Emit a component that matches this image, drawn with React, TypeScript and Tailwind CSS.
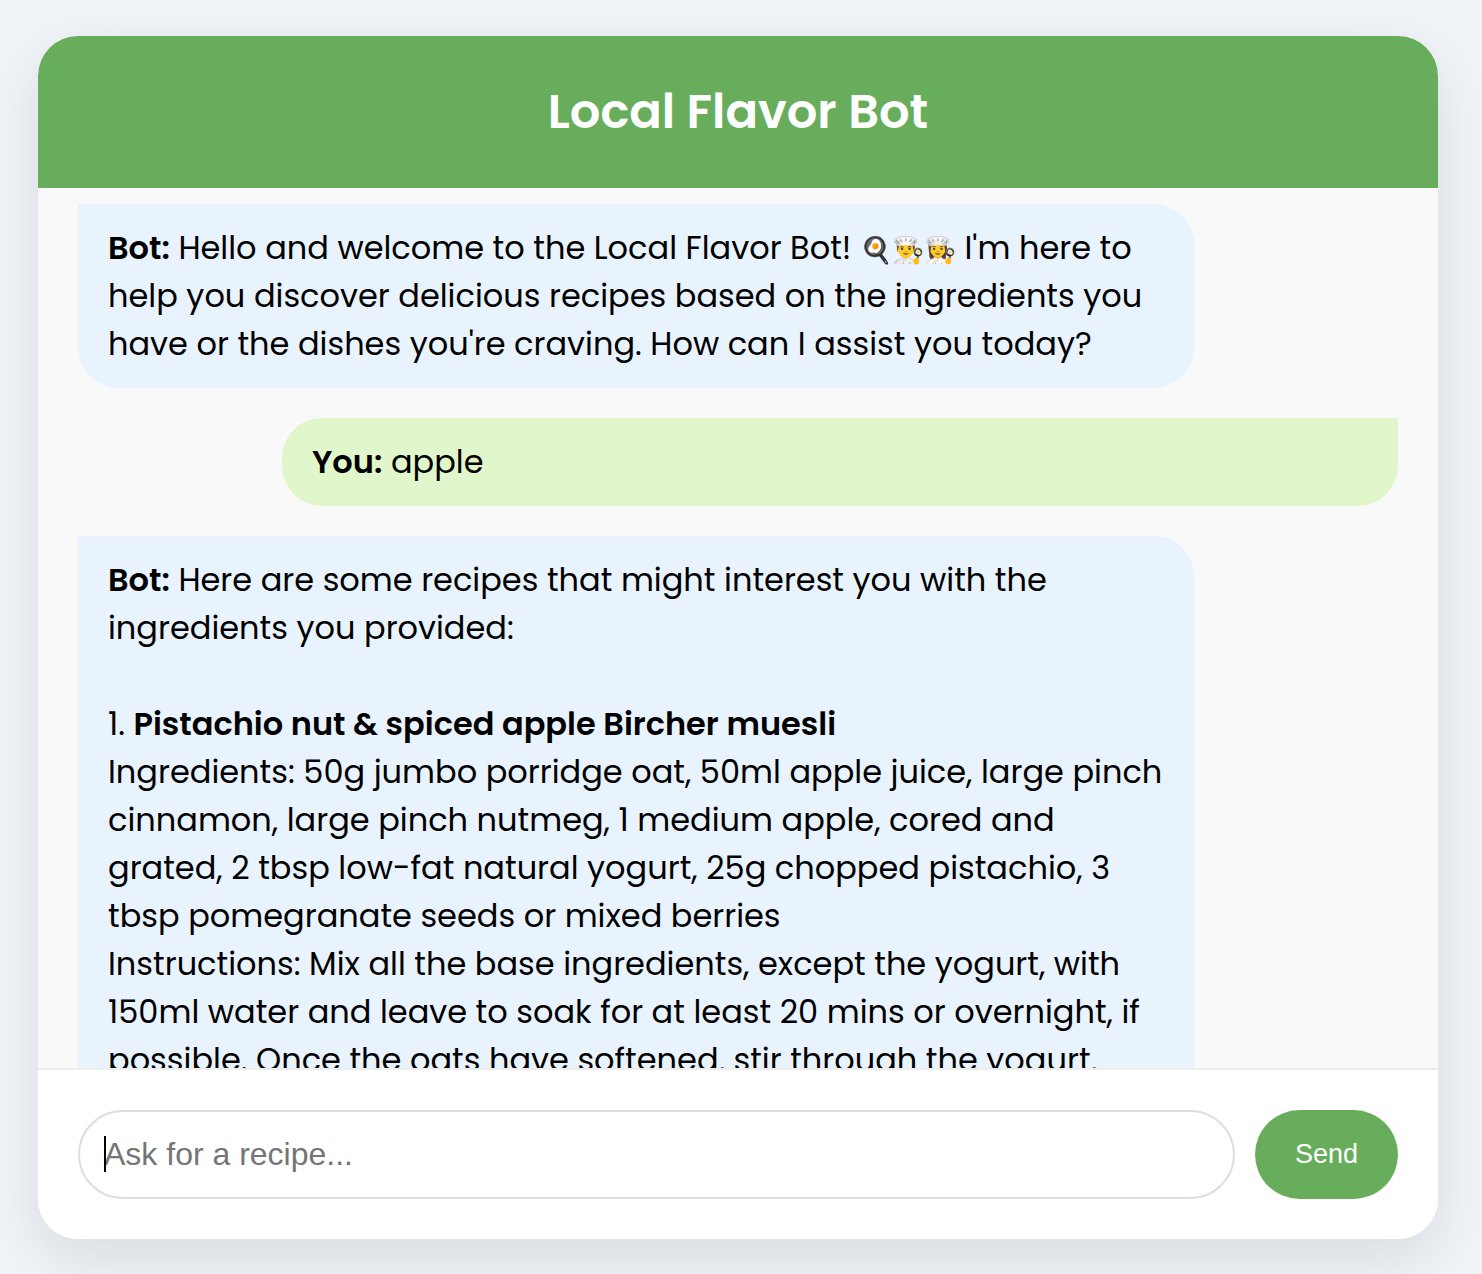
import type { ReactNode } from "react";

type Sender = "bot" | "you";

function Message({ sender, children }: { sender: Sender; children: ReactNode }) {
  const look =
    sender === "bot"
      ? "self-start rounded-tl-none bg-[#e8f3fe]"
      : "self-end rounded-tr-none bg-[#e1f6ca]";
  return (
    <article className={`w-[calc(80%+60px)] shrink-0 rounded-[40px] px-[30px] py-5 ${look}`}>
      <strong className="font-semibold">{sender === "bot" ? "Bot:" : "You:"}</strong> {children}
    </article>
  );
}

export default function App() {
  return (
    <div className="flex h-screen flex-col bg-[#f0f4f9] pt-9 pr-11 pb-[35px] pl-[38px] font-['Poppins','Open_Sans',sans-serif] text-black">
      <main className="flex min-h-0 flex-1 flex-col overflow-hidden rounded-[40px] bg-white shadow-[0_20px_60px_rgba(0,0,0,0.1)]">
        <header className="bg-[#68ad5c] p-10 text-center text-white">
          <h1 className="text-5xl leading-[72px] font-semibold">Local Flavor Bot</h1>
        </header>

        <section
          aria-label="Conversation"
          className="flex min-h-0 flex-1 flex-col gap-[30px] overflow-y-auto bg-[#f9f9f9] px-10 pt-4 text-[32px] leading-[48px] [scrollbar-width:none]"
        >
          <Message sender="bot">
            Hello and welcome to the Local Flavor Bot! <span className="text-[26px] leading-none">🍳👨‍🍳👩‍🍳</span> I'm here to
            help you discover delicious recipes based on the ingredients you have or the dishes you're craving. How can I
            assist you today?
          </Message>
          <Message sender="you">apple</Message>
          <Message sender="bot">
            Here are some recipes that might interest you with the ingredients you provided:
            <br />
            <br />
            1. <strong className="font-semibold">Pistachio nut &amp; spiced apple Bircher muesli</strong>
            <br />
            Ingredients: 50g jumbo porridge oat, 50ml apple juice, large pinch cinnamon, large pinch nutmeg, 1 medium
            apple, cored and grated, 2 tbsp low-fat natural yogurt, 25g chopped pistachio, 3 tbsp pomegranate seeds or
            mixed berries
            <br />
            Instructions: Mix all the base ingredients, except the yogurt, with 150ml water and leave to soak for at least
            20 mins or overnight, if possible. Once the oats have softened, stir through the yogurt,
          </Message>
        </section>

        <form
          className="flex gap-5 border-t-2 border-[#eeeeee] bg-white p-10 font-['Liberation_Sans',Arial,sans-serif]"
          onSubmit={(event) => event.preventDefault()}
        >
          <div className="relative min-w-0 flex-1">
            <input
              type="text"
              aria-label="Ask for a recipe"
              placeholder="Ask for a recipe..."
              className="block h-[89px] w-full rounded-full border-2 border-[#dddddd] bg-white px-6 text-[32px] outline-none placeholder:text-[#757575]"
            />
            <span aria-hidden="true" className="absolute top-[26px] left-[26px] h-9 w-0.5 bg-black" />
          </div>
          <button type="submit" className="rounded-full bg-[#68ad5c] px-10 text-[27px] text-white">
            Send
          </button>
        </form>
      </main>
    </div>
  );
}
